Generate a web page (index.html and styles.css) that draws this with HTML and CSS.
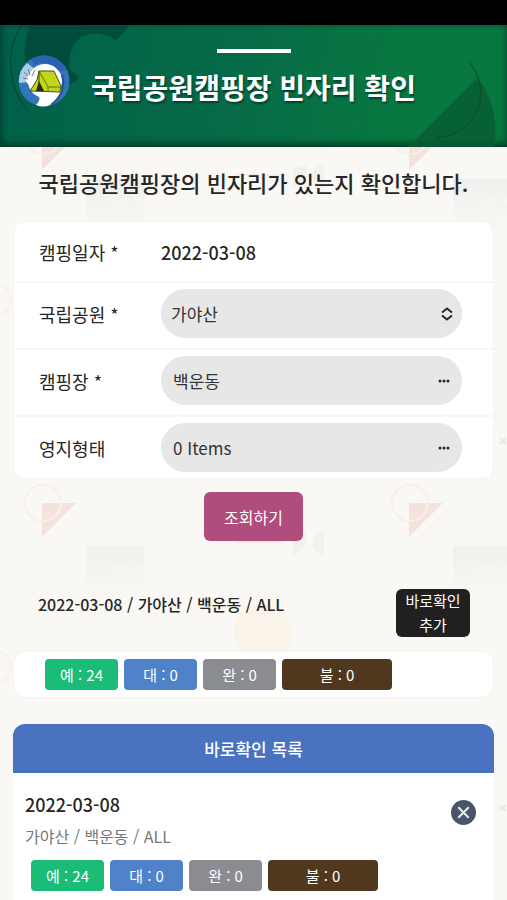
FILE: index.html
```html
<!DOCTYPE html>
<html lang="ko">
<head>
<meta charset="utf-8">
<meta name="viewport" content="width=device-width, initial-scale=1">
<title>국립공원캠핑장 빈자리 확인</title>
<link rel="stylesheet" href="styles.css">
</head>
<body>
<svg class="backdrop" aria-hidden="true">
  <defs>
    <linearGradient id="fade" x1="0" y1="0" x2="0" y2="1">
      <stop offset="0" stop-color="#eff1ef"/>
      <stop offset="1" stop-color="#f8f7f3"/>
    </linearGradient>
    <pattern id="shapes" width="367" height="367" patternUnits="userSpaceOnUse" patternTransform="translate(0 110)">
      <path d="M42 26h34l-34 34z" fill="#f4e3dc"/>
      <circle cx="43" cy="26" r="18" fill="none" stroke="#f5f0e8" stroke-width="2"/>
      <rect x="86" y="69" width="58" height="50" fill="url(#fade)"/>
      <g fill="#f6f7f4">
        <circle cx="114" cy="91" r="3"/><circle cx="126" cy="91" r="3"/><circle cx="138" cy="91" r="3"/>
        <circle cx="114" cy="104" r="3"/><circle cx="126" cy="104" r="3"/><circle cx="138" cy="104" r="3"/>
      </g>
      <circle cx="263" cy="156" r="29" fill="#f9f3ea"/>
      <path d="M234 66h48v-2h-48z" fill="#f5eae8"/>
      <path d="M293 79V62q2-8 13-7v13zM324 53v26q-12-4-12-13t12-13z" fill="#f1f2ef"/>
      <circle cx="-5" cy="190" r="16" fill="none" stroke="#f7f1eb" stroke-width="2"/>
      <path d="M133 328l6 6m0-6l-6 6" stroke="#e8e8e4" stroke-width="2"/>
    </pattern>
  </defs>
  <rect width="100%" height="100%" fill="url(#shapes)"/>
</svg>

<div class="status-bar"></div>

<header class="hero">
  <svg class="hero-art" viewBox="0 0 507 122" preserveAspectRatio="none" aria-hidden="true">
    <path d="M30 0C18 29 27 60 50 68L74 57Q80 54 76 49C65 46 70 31 71 27C75 7 101 3 116 16L130 0Z" fill="#004637" opacity=".8"/>
    <path d="M22 0C6 22 5 61 30 88" fill="none" stroke="#033f32" stroke-width="1"/>
    <path d="M477 53L408 122H494C499 97 491 68 477 53Z" fill="#075b35" opacity=".8"/>
    <path d="M469 37C492 64 481 108 436 113" fill="none" stroke="#064b2e" stroke-width="1"/>
  </svg>
  <div class="hero-row">
    <svg class="logo" viewBox="0 0 52 52" role="img" aria-label="캠핑 로고">
      <circle cx="26" cy="26" r="25.5" fill="#3474bd"/>
      <path d="M13 4A25.500 25.500 0 0 1 49 15L39 17C32 7 23 6 17 10Z" fill="#2862b0"/>
      <path d="M1 28A25 25 0 0 1 9 8L18 15L11 27Z" fill="#a9cce9"/>
      <circle cx="27" cy="26" r="17" fill="#fff"/>
      <path d="M14 38C22 40 24 43 18 50Q25 53 32 50C38 48 42 42 44 34L36 35Z" fill="#fff"/>
      <path d="M44 20C48 33 42 43 33 50" fill="none" stroke="#235494" stroke-width="2"/>
      <circle cx="13" cy="25" r="5" fill="#fff"/>
      <path d="M6 17l4 4m0-7l2 6m5-5l-3 6M5 23l5 1" stroke="#667a88" stroke-width="1"/>
      <path d="M21 16L36 16L43 31L42 37L12 36L19 25Z" fill="#bfd719" stroke="#475015" stroke-width="1"/>
      <path d="M21 16L30 32L30 37M30 32H43" fill="none" stroke="#677219" stroke-width="1"/>
      <path d="M21 26L18 36H26Z" fill="#292c17"/>
      <path d="M21 16V28" stroke="#475015" stroke-width="1"/>
    </svg>
    <h1 class="hero-title">국립공원캠핑장 빈자리 확인</h1>
  </div>
</header>

<main class="content">
  <p class="intro">국립공원캠핑장의 빈자리가 있는지 확인합니다.</p>

  <form class="search">
    <div class="fields">
      <div class="field">
        <label for="date">캠핑일자 *</label>
        <input class="date-input" id="date" type="text" value="2022-03-08">
      </div>
      <div class="field">
        <label for="park">국립공원 *</label>
        <div class="select-wrap">
          <select class="pill" id="park"><option>가야산</option></select>
          <svg class="select-icon" viewBox="0 0 12 14" aria-hidden="true"><path d="M1 5.500L6 1.500L11 5.500M1 8.500L6 12.500L11 8.500"/></svg>
        </div>
      </div>
      <div class="field">
        <label for="camp">캠핑장 *</label>
        <button class="pill picker" id="camp" type="button">백운동
          <svg class="dots" viewBox="0 0 12 4" aria-hidden="true"><circle cx="2" cy="2" r="1.500"/><circle cx="6" cy="2" r="1.500"/><circle cx="10" cy="2" r="1.500"/></svg>
        </button>
      </div>
      <div class="field">
        <label for="site">영지형태</label>
        <button class="pill picker" id="site" type="button">0 Items
          <svg class="dots" viewBox="0 0 12 4" aria-hidden="true"><circle cx="2" cy="2" r="1.500"/><circle cx="6" cy="2" r="1.500"/><circle cx="10" cy="2" r="1.500"/></svg>
        </button>
      </div>
    </div>
    <button class="submit" type="button">조회하기</button>
  </form>

  <section class="result">
    <div class="result-head">
      <h2 class="result-title">2022-03-08 / 가야산 / 백운동 / ALL</h2>
      <button class="add" type="button">바로확인<br>추가</button>
    </div>
    <div class="chips result-chips">
      <span class="chip free">예 : 24</span>
      <span class="chip wait">대 : 0</span>
      <span class="chip done">완 : 0</span>
      <span class="chip off">불 : 0</span>
    </div>
  </section>

  <section class="saved">
    <h2 class="saved-title">바로확인 목록</h2>
    <article class="saved-item">
      <div class="saved-head">
        <div>
          <h3 class="saved-date">2022-03-08</h3>
          <p class="saved-place">가야산 / 백운동 / ALL</p>
        </div>
        <button class="remove" type="button" aria-label="삭제">
          <svg viewBox="0 0 24 24" aria-hidden="true"><path d="M7 7L17 17M17 7L7 17"/></svg>
        </button>
      </div>
      <div class="chips saved-chips">
        <span class="chip free">예 : 24</span>
        <span class="chip wait">대 : 0</span>
        <span class="chip done">완 : 0</span>
        <span class="chip off">불 : 0</span>
      </div>
    </article>
  </section>
</main>
</body>
</html>
```
FILE: styles.css
```css
* {
  box-sizing: border-box;
}

body {
  position: relative;
  display: flex;
  flex-direction: column;
  min-height: 100vh;
  margin: 0;
  background: #f9f8f4;
  color: #262626;
  font-family: "Noto Sans CJK KR", sans-serif;
  font-size: 16px;
  line-height: 24px;
}

h1, h2, h3, p {
  margin: 0;
}

button, input, select {
  margin: 0;
  border: 0;
  color: inherit;
  font: inherit;
}

.backdrop {
  position: absolute;
  inset: 0;
  z-index: -1;
  width: 100%;
  height: 100%;
}

.status-bar {
  height: 25px;
  background: #000;
}

.hero {
  position: relative;
  padding: 24px 18px 40px;
  background: linear-gradient(100deg, #006049 0%, #066a47 45%, #08783f 80%, #087640 100%);
  box-shadow: inset 0 -4px 6px #04402c, inset 3px 0 4px #04503c;
}

.hero-art {
  position: absolute;
  inset: 0;
  width: 100%;
  height: 100%;
}

.hero-row {
  position: relative;
  display: grid;
  grid-template-columns: 52px 1fr 52px;
  align-items: end;
}

.logo {
  width: 52px;
  height: 52px;
}

.hero-title {
  display: flex;
  flex-direction: column;
  align-items: center;
  gap: 14px;
  color: #fff;
  font-size: 28px;
  font-weight: 700;
  line-height: 40px;
  text-shadow: 1px 2px 2px #04402c;
  white-space: nowrap;
}

.hero-title::before {
  width: 74px;
  height: 4px;
  background: #fff;
  content: "";
}

.content {
  display: flex;
  flex: 1;
  flex-direction: column;
  padding: 0 13px;
}

.intro {
  padding: 19px 0 23px;
  font-size: 22px;
  font-weight: 500;
  line-height: 32px;
  text-align: center;
}

.search {
  display: flex;
  flex-direction: column;
  align-items: center;
  gap: 13px;
}

.fields {
  width: 100%;
  border: 1px solid #f5f4f1;
  border-radius: 12px;
  background: #fff;
}

.field {
  display: grid;
  grid-template-columns: 122px 1fr;
  align-items: center;
  padding: 6px 31px 10px 25px;
  border-bottom: 2px solid #f6f6f5;
  font-size: 18px;
}

.field:first-child {
  padding: 5px 31px 5px 25px;
}

.field:last-child {
  padding-bottom: 6px;
  border-bottom: 0;
}

.date-input {
  width: 100%;
  height: 49px;
  padding: 0;
  background: transparent;
  font-weight: 500;
}

.pill {
  width: 100%;
  height: 49px;
  border-radius: 25px;
  background: #e7e7e7;
  color: #333;
  font-size: 17px;
}

.select-wrap {
  position: relative;
}

select.pill {
  display: block;
  padding: 0 10px;
  appearance: none;
}

.select-icon {
  position: absolute;
  top: 18px;
  right: 9px;
  width: 12px;
  height: 14px;
  fill: none;
  stroke: #262626;
  stroke-width: 2;
  pointer-events: none;
}

.picker {
  display: flex;
  align-items: center;
  justify-content: space-between;
  padding: 0 12px;
}

.dots {
  width: 12px;
  height: 4px;
  fill: #262626;
}

.submit {
  height: 49px;
  padding: 0 20px;
  border-radius: 6px;
  background: #b04d7c;
  color: #fff;
}

.result {
  margin-top: 48px;
}

.result-head {
  display: flex;
  justify-content: space-between;
  padding: 0 24px 0 25px;
}

.result-title {
  padding-top: 3px;
  font-size: 16px;
  font-weight: 500;
}

.add {
  width: 74px;
  padding: 0;
  border-radius: 6px;
  background: #202020;
  color: #fff;
  font-size: 15px;
  line-height: 24px;
}

.chips {
  display: flex;
  gap: 6px;
}

.result-chips {
  margin-top: 14px;
  padding: 7px 31px;
  border: 1px solid #f5f4f1;
  border-radius: 12px;
  background: #fff;
}

.chip {
  width: 73px;
  border-radius: 4px;
  color: #fff;
  font-size: 15px;
  line-height: 31px;
  text-align: center;
}

.free {
  background: #1abc77;
}

.wait {
  background: #5082ca;
}

.done {
  background: #8b8c91;
}

.off {
  width: 110px;
  background: #50381e;
}

.saved {
  flex: 1;
  margin-top: 26px;
  border-radius: 12px 12px 0 0;
  background: #fff;
}

.saved-title {
  border-radius: 12px 12px 0 0;
  background: #4972c0;
  color: #fff;
  font-size: 17px;
  font-weight: 500;
  line-height: 49px;
  text-align: center;
}

.saved-item {
  padding: 15px 18px 10px 12px;
}

.saved-head {
  display: flex;
  align-items: center;
  justify-content: space-between;
}

.saved-date {
  font-size: 18px;
  font-weight: 500;
  line-height: 32px;
}

.saved-place {
  color: #777;
  line-height: 32px;
}

.remove {
  width: 25px;
  height: 25px;
  margin-bottom: 16px;
  padding: 0;
  border-radius: 50%;
  background: #4a5568;
}

.remove svg {
  display: block;
  fill: none;
  stroke: #e8ecf2;
  stroke-width: 2;
}

.saved-chips {
  padding: 8px 6px 0;
}
```
